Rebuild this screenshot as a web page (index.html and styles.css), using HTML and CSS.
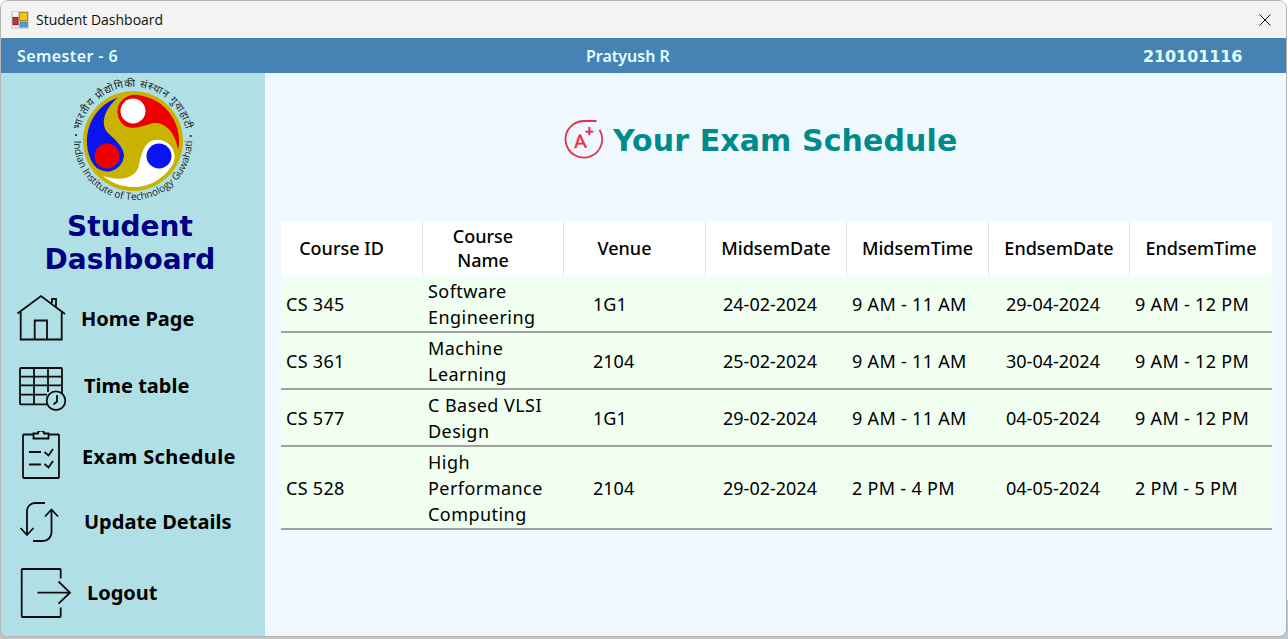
FILE: index.html
```html
<!DOCTYPE html>
<html lang="en">
<head>
<meta charset="utf-8">
<title>Student Dashboard</title>
<link rel="stylesheet" href="styles.css">
</head>
<body>
<div class="window">
  <div class="titlebar">
    <svg class="app-icon" viewBox="0 0 18 18"><rect width="18" height="18" fill="#d4d4d4"/><rect x="2" y="1" width="5" height="5" fill="#f4f4f4"/><rect x="8.500" y="1.500" width="8" height="8" fill="#f8c21c" stroke="#b98a00"/><rect x="2" y="6.500" width="5" height="7" fill="#d03028" stroke="#7a2a20"/><rect x="2" y="14.500" width="2" height="2" fill="#f4f4f4"/><rect x="5" y="14.500" width="2" height="2" fill="#f4f4f4"/><rect x="9" y="11" width="7.500" height="5" fill="#5b9bd5" stroke="#3c6fb0" stroke-width=".6"/></svg>
    <span class="app-title">Student Dashboard</span>
    <svg class="close-icon" viewBox="0 0 12 12"><path d="M.5.5l11 11M11.500.5l-11 11" stroke="#111" stroke-width="1" fill="none"/></svg>
  </div>
  <header class="infobar">
    <span class="semester">Semester - 6</span>
    <span>Pratyush R</span>
    <span class="roll">210101116</span>
  </header>
  <div class="body-row">
    <aside class="sidebar">
      <svg class="logo" viewBox="70 78 126 128">
        <defs>
          <path id="arc-low" d="M74 141a59 59 0 0 0 118 0"/>
          <path id="arc-high" d="M79 141a54 54 0 0 1 108 0"/>
          <path id="comma" d="M-15-43.500A46 46 0 0 0-40 23A17 17 0 0 0-9 15C-9 5-20-3-25-8C-32-15-31-30-15-43.500Z"/>
        </defs>
        <circle cx="133" cy="141" r="50" fill="#c8b400"/>
        <g transform="translate(133 141)">
          <use href="#comma" fill="#0a14f0"/>
          <use href="#comma" fill="#ee0000" transform="rotate(120)"/>
          <use href="#comma" fill="#ffffff" transform="rotate(240)"/>
          <circle cx="-26" cy="15" r="12.500" fill="#ee0000"/>
          <circle cx="0" cy="-30" r="12.500" fill="#ffffff"/>
          <circle cx="26" cy="15" r="12.500" fill="#0a14f0"/>
        </g>
        <circle cx="76" cy="135" r="1.100" fill="#222"/>
        <circle cx="190.700" cy="136" r="1.100" fill="#222"/>
        <text class="logo-en"><textPath href="#arc-low" startOffset="50%" text-anchor="middle">Indian Institute of Technology Guwahati</textPath></text>
        <text class="logo-hi"><textPath href="#arc-high" startOffset="50%" text-anchor="middle">भारतीय प्रौद्योगिकी संस्थान गुवाहाटी</textPath></text>
      </svg>
      <h1 class="brand">Student<br>Dashboard</h1>
      <nav class="nav">
        <a class="nav-item nav-home">
          <svg class="nav-icon icon-home" viewBox="15 294 52 48"><path d="M17.500 313.500L41 296l24 18M20.700 312v27.500h41V312M34.700 339.500v-19h12.300v19M52 303v-4h4v7.500"/></svg>
          <span>Home Page</span>
        </a>
        <a class="nav-item nav-time">
          <svg class="nav-icon icon-time" viewBox="18 366 49 46"><path d="M21 368h40a1 1 0 0 1 1 1v25M47 404.300H21a1 1 0 0 1-1-1V369a1 1 0 0 1 1-1M20 376.700h42M20 385.300h42M20 394.700h27M34 368v36M48 368v24"/><circle class="clock" cx="56" cy="400.700" r="9.300"/><path d="M57 395v6.500l-3.500 3"/></svg>
          <span>Time table</span>
        </a>
        <a class="nav-item nav-exam">
          <svg class="nav-icon icon-exam" viewBox="21 431 40 49"><path d="M33 434.500h-9a1 1 0 0 0-1 1V477a1 1 0 0 0 1 1h34a1 1 0 0 0 1-1V435.500a1 1 0 0 0-1-1h-9M33.500 433.500h4.500a3 3 0 0 1 6 0h4.500v5h-15zM29 452h12M29 464.500h12M44.500 452l4 3.500 4.500-6.500M44.500 464l4 3.500 4.500-6.500"/></svg>
          <span>Exam Schedule</span>
        </a>
        <a class="nav-item nav-update">
          <svg class="nav-icon icon-update" viewBox="18 500 42 44"><path d="M45 503h-10a8 8 0 0 0-8 8v24.500M20.500 528l6.500 7 6.500-7M33 541h10a8.500 8.500 0 0 0 8.500-8.500V510M45 516.500l6.500-7 6.500 7"/></svg>
          <span>Update Details</span>
        </a>
        <a class="nav-item nav-logout">
          <svg class="nav-icon icon-logout" viewBox="20 568 52 51"><path d="M60.700 578.500V570a1 1 0 0 0-1-1H22.700a1 1 0 0 0-1 1v46a1 1 0 0 0 1 1h37a1 1 0 0 0 1-1v-8.500M37.500 592.700H70M58.500 581.500L70 592.700l-11.500 11"/></svg>
          <span>Logout</span>
        </a>
      </nav>
    </aside>
    <main class="content">
      <div class="page-title">
        <svg class="grade-icon" viewBox="564 120 40 40">
          <path d="M596.500 121H583.700A18.300 18.300 0 1 0 599.500 129.800"/>
          <text class="grade-a" x="574.500" y="148" transform="rotate(-3 574.500 148)">A</text>
          <text class="grade-plus" x="585" y="136">+</text>
        </svg>
        <h2>Your Exam Schedule</h2>
      </div>
      <table class="schedule">
        <colgroup>
          <col class="c1"><col class="c2"><col class="c3"><col class="c4"><col class="c5"><col class="c6"><col class="c7">
        </colgroup>
        <thead>
          <tr>
            <th class="shift">Course ID</th><th class="shift">Course<br>Name</th><th class="shift">Venue</th><th>MidsemDate</th><th>MidsemTime</th><th>EndsemDate</th><th>EndsemTime</th>
          </tr>
        </thead>
        <tbody>
          <tr class="r2"><td>CS 345</td><td class="name">Software<br>Engineering</td><td class="venue">1G1</td><td class="date">24-02-2024</td><td>9 AM - 11 AM</td><td class="date">29-04-2024</td><td>9 AM - 12 PM</td></tr>
          <tr class="r2"><td>CS 361</td><td class="name">Machine<br>Learning</td><td class="venue">2104</td><td class="date">25-02-2024</td><td>9 AM - 11 AM</td><td class="date">30-04-2024</td><td>9 AM - 12 PM</td></tr>
          <tr class="r2"><td>CS 577</td><td class="name">C Based VLSI<br>Design</td><td class="venue">1G1</td><td class="date">29-02-2024</td><td>9 AM - 11 AM</td><td class="date">04-05-2024</td><td>9 AM - 12 PM</td></tr>
          <tr class="r3"><td>CS 528</td><td class="name">High<br>Performance<br>Computing</td><td class="venue">2104</td><td class="date">29-02-2024</td><td>2 PM - 4 PM</td><td class="date">04-05-2024</td><td>2 PM - 5 PM</td></tr>
        </tbody>
      </table>
    </main>
  </div>
</div>
</body>
</html>
```
FILE: styles.css
```css
* { box-sizing: border-box; }
html, body { margin: 0; height: 100%; overflow: hidden; }
body {
  font-family: "Noto Sans", sans-serif;
  background: linear-gradient(#fff 0, #fff 600px, #c4c4c4 600px);
}

.window {
  width: 1287px;
  height: 637px;
  display: flex;
  flex-direction: column;
  border: 1px solid #b4b4b4;
  border-radius: 8px;
  overflow: hidden;
  background: #f0f8ff;
}

.titlebar {
  height: 37px;
  flex: none;
  display: flex;
  align-items: center;
  background: #f3f3f3;
  padding: 0 15px 0 10px;
}
.app-icon { width: 18px; height: 18px; margin-right: 7px; }
.app-title { font: 14px "Open Sans", sans-serif; color: #111; }
.close-icon { width: 12px; height: 12px; margin-left: auto; }

.infobar {
  height: 35px;
  flex: none;
  display: grid;
  grid-template-columns: 569px 557px 1fr;
  align-items: center;
  padding-left: 16px;
  background: #4682b4;
  color: #e0ffff;
  font: 600 16px "Noto Sans", sans-serif;
}
.infobar .semester { letter-spacing: .4px; }
.infobar .roll { font: 700 16px "DejaVu Sans", sans-serif; padding-top: 2px; letter-spacing: -.1px; }

.body-row { flex: 1; display: flex; min-height: 0; }

.sidebar {
  width: 264px;
  flex: none;
  background: #b0e0e6;
  padding-top: 5px;
}
.logo { display: block; width: 126px; height: 128px; margin-left: 69px; overflow: visible; }
.logo-en { font: 10px "Open Sans", sans-serif; fill: #222; }
.logo-hi { font: 10.500px "Noto Sans", sans-serif; fill: #222; letter-spacing: .8px; }

.brand {
  margin: 4px 0 0;
  padding-right: 6px;
  text-align: center;
  color: #000080;
  font: 700 28px/33px "DejaVu Sans", sans-serif;
}

.nav { display: flex; flex-direction: column; }
.nav-item {
  display: flex;
  align-items: center;
  color: #000;
  font: 700 20px "Noto Sans", sans-serif;
}
.nav-icon { flex: none; fill: none; stroke: #0c0c0c; stroke-width: 1.800; }
.clock { fill: #b0e0e6; }

.icon-home { width: 52px; height: 48px; margin: 0 14px 0 14px; }
.icon-time { width: 49px; height: 46px; margin: 0 17px 0 17px; }
.icon-exam { width: 40px; height: 49px; margin: 0 21px 0 20px; }
.icon-update { width: 42px; height: 44px; margin: 0 24px 0 17px; }
.icon-logout { width: 52px; height: 51px; margin: 0 15px 0 19px; }

.nav-home { margin-top: 18px; }
.nav-time { margin-top: 24px; }
.nav-exam { margin-top: 19px; }
.nav-update { margin-top: 20px; }
.nav-logout { margin-top: 24px; }
.nav-time span { padding-bottom: 8px; }
.nav-exam span { padding-top: 1px; letter-spacing: .35px; }
.nav-update span, .nav-logout span { padding-bottom: 2px; }

.content { flex: 1; padding: 46px 14px 0 16px; }

.page-title { display: flex; align-items: center; margin-left: 283px; height: 42px; }
.grade-icon { width: 40px; height: 40px; fill: none; stroke: #e8304a; stroke-width: 1.800; flex: none; margin-right: 9px; }
.grade-a { font: 400 18px "Lato", sans-serif; fill: #e8304a; stroke: #e8304a; stroke-width: .6; }
.grade-plus { font: 700 15px "Lato", sans-serif; fill: #e8304a; stroke: #e8304a; stroke-width: .5; }
.page-title h2 {
  margin: 0;
  color: #008b8b;
  font: 700 30px "DejaVu Sans", sans-serif;
  letter-spacing: .1px;
}

.schedule {
  margin-top: 60px;
  width: 991px;
  table-layout: fixed;
  border-collapse: separate;
  border-spacing: 0;
  color: #000;
  font: 400 18px/26px "Noto Sans", sans-serif;
}
.c1 { width: 142px; } .c2 { width: 141px; } .c3 { width: 142px; } .c4 { width: 141px; }
.c5 { width: 142px; } .c6 { width: 141px; } .c7 { width: 142px; }

.schedule th {
  height: 55px;
  padding: 0 0 2px;
  background: #fff;
  border-right: 1px solid #e4e4e4;
  font-weight: 500;
  line-height: 24px;
  text-align: center;
}
.schedule th.shift { padding-right: 20px; }
.schedule th:last-child { border-right: 0; }
.schedule td {
  padding: 0 0 0 5px;
  background: #f0fff0;
  border-bottom: 2px solid #a0a0a0;
  vertical-align: middle;
  letter-spacing: .3px;
}
.schedule td.name { letter-spacing: .45px; }
.schedule td.venue { padding-left: 29px; letter-spacing: 0; }
.schedule td.date { padding-left: 17px; letter-spacing: 0; }
.r2 { height: 57px; }
.r3 { height: 83px; }
```
